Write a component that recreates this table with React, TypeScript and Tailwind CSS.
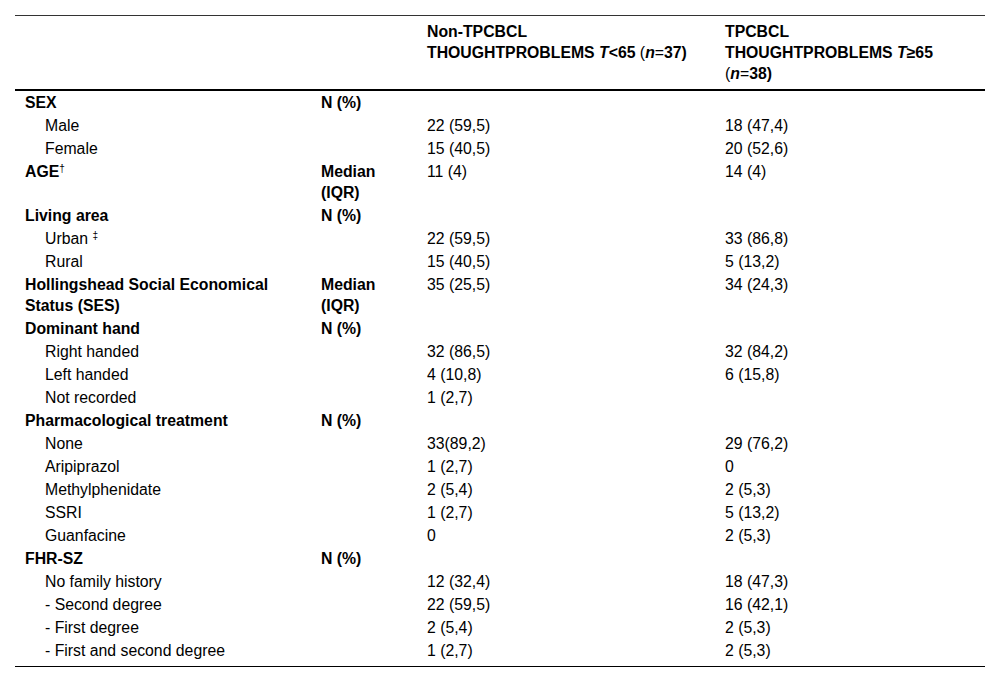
import React from "react";

type Row = {
  label: React.ReactNode;
  stat?: React.ReactNode;
  a?: string;
  b?: string;
  head?: boolean;
};

const rows: Row[] = [
  { label: "SEX", stat: "N (%)", head: true },
  { label: "Male", a: "22 (59,5)", b: "18 (47,4)" },
  { label: "Female", a: "15 (40,5)", b: "20 (52,6)" },
  {
    label: (
      <>
        AGE<sup className="text-[10px] font-normal">†</sup>
      </>
    ),
    stat: (
      <>
        Median
        <br />
        (IQR)
      </>
    ),
    a: "11 (4)",
    b: "14 (4)",
    head: true,
  },
  { label: "Living area", stat: "N (%)", head: true },
  {
    label: (
      <>
        Urban <sup className="text-[10px]">‡</sup>
      </>
    ),
    a: "22 (59,5)",
    b: "33 (86,8)",
  },
  { label: "Rural", a: "15 (40,5)", b: "5 (13,2)" },
  {
    label: (
      <>
        Hollingshead Social Economical
        <br />
        Status (SES)
      </>
    ),
    stat: (
      <>
        Median
        <br />
        (IQR)
      </>
    ),
    a: "35 (25,5)",
    b: "34 (24,3)",
    head: true,
  },
  { label: "Dominant hand", stat: "N (%)", head: true },
  { label: "Right handed", a: "32 (86,5)", b: "32 (84,2)" },
  { label: "Left handed", a: "4 (10,8)", b: "6 (15,8)" },
  { label: "Not recorded", a: "1 (2,7)" },
  { label: "Pharmacological treatment", stat: "N (%)", head: true },
  { label: "None", a: "33(89,2)", b: "29 (76,2)" },
  { label: "Aripiprazol", a: "1 (2,7)", b: "0" },
  { label: "Methylphenidate", a: "2 (5,4)", b: "2 (5,3)" },
  { label: "SSRI", a: "1 (2,7)", b: "5 (13,2)" },
  { label: "Guanfacine", a: "0", b: "2 (5,3)" },
  { label: "FHR-SZ", stat: "N (%)", head: true },
  { label: "No family history", a: "12 (32,4)", b: "18 (47,3)" },
  { label: "- Second degree", a: "22 (59,5)", b: "16 (42,1)" },
  { label: "- First degree", a: "2 (5,4)", b: "2 (5,3)" },
  { label: "- First and second degree", a: "1 (2,7)", b: "2 (5,3)" },
];

const App = () => {
  return (
    <div className="w-[1000px] h-[683px] bg-white pt-[15px] px-[15px] font-['Liberation_Sans',Arial,sans-serif] text-[15.8px] leading-[21px] text-black">
      <table className="w-[970px] border-collapse table-fixed">
        <colgroup>
          <col className="w-[296px]" />
          <col className="w-[106px]" />
          <col className="w-[298px]" />
          <col className="w-[270px]" />
        </colgroup>
        <thead>
          <tr className="border-t border-[#333] border-b-2 border-b-black">
            <th className="pl-[10px] py-[5px]"></th>
            <th className="pl-[10px] py-[5px]"></th>
            <th className="pl-[10px] pr-1 py-[5px] text-left align-top font-bold">
              Non-TPCBCL
              <br />
              THOUGHTPROBLEMS <i>T</i>&lt;65 <span className="font-normal">(</span>
              <i>n</i>
              <span className="font-normal">=</span>37)
            </th>
            <th className="pl-[10px] pr-1 py-[5px] text-left align-top font-bold">
              TPCBCL
              <br />
              THOUGHTPROBLEMS <i>T</i>≥65
              <br />
              <span className="font-normal">(</span>
              <i>n</i>
              <span className="font-normal">=</span>38)
            </th>
          </tr>
        </thead>
        <tbody className="border-b border-black">
          {rows.map((r, i) => {
            const last = i === rows.length - 1;
            const pad = last ? "pt-px pb-[5px]" : "py-px";
            return (
              <tr key={i}>
                <td
                  className={`${pad} align-top ${
                    r.head ? "pl-[10px] font-bold" : "pl-[30px]"
                  }`}
                >
                  {r.label}
                </td>
                <td className={`${pad} pl-[10px] align-top font-bold`}>
                  {r.stat}
                </td>
                <td className={`${pad} pl-[10px] align-top`}>{r.a}</td>
                <td className={`${pad} pl-[10px] align-top`}>{r.b}</td>
              </tr>
            );
          })}
        </tbody>
      </table>
    </div>
  );
};

export default App;
